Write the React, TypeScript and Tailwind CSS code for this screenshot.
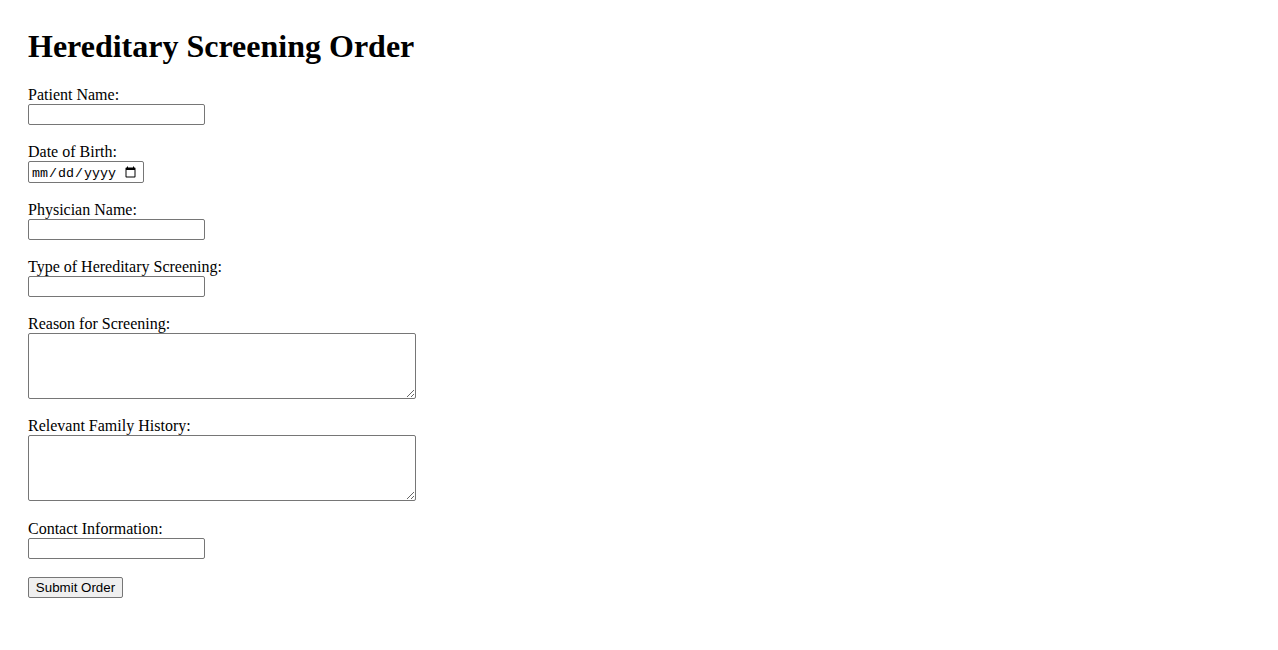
import React from "react";

const inputCls =
  "block w-[177px] h-[21px] border border-[#767676] rounded-[2px] bg-white px-[2px] py-[1px] text-[13.33px] font-['Liberation_Sans',Arial,sans-serif] text-black outline-none";

const textareaCls =
  "block w-[388px] h-[66px] border border-[#767676] rounded-[2px] bg-white px-[2px] py-[1px] text-[13.33px] font-['Liberation_Mono',monospace] text-black outline-none resize";

function Field({ label, children }: { label: string; children: React.ReactNode }) {
  return (
    <div className="flex flex-col items-start mb-[18.1px]">
      <label className="block h-[18px] leading-[18px]">{label}</label>
      {children}
    </div>
  );
}

export default function App() {
  return (
    <div className="min-h-screen bg-white text-black font-['Liberation_Serif','Times_New_Roman',serif] text-[16px] leading-[normal] pt-[28px] px-[28px]">
      <h1 className="text-[32px] font-bold leading-[37px] mb-[21px]">Hereditary Screening Order</h1>
      <form className="flex flex-col items-start" onSubmit={(e) => e.preventDefault()}>
        <Field label="Patient Name:">
          <input type="text" className={inputCls} />
        </Field>
        <Field label="Date of Birth:">
          <input
            type="date"
            className="block w-[116px] h-[22px] border border-[#767676] rounded-[2px] bg-white pl-[2px] pr-[4px] pt-[2px] pb-0 text-[13.33px] font-['Liberation_Mono','DejaVu_Sans_Mono',monospace] text-black outline-none"
          />
        </Field>
        <Field label="Physician Name:">
          <input type="text" className={inputCls} />
        </Field>
        <Field label="Type of Hereditary Screening:">
          <input type="text" className={inputCls} />
        </Field>
        <Field label="Reason for Screening:">
          <textarea className={textareaCls} />
        </Field>
        <Field label="Relevant Family History:">
          <textarea className={textareaCls} />
        </Field>
        <Field label="Contact Information:">
          <input type="text" className={inputCls} />
        </Field>
        <button
          type="submit"
          className="w-[95px] h-[21px] bg-[#efefef] border border-[#767676] rounded-[2px] px-[6px] text-[13.33px] leading-[normal] font-['Liberation_Sans',Arial,sans-serif] text-black"
        >
          Submit Order
        </button>
      </form>
    </div>
  );
}
